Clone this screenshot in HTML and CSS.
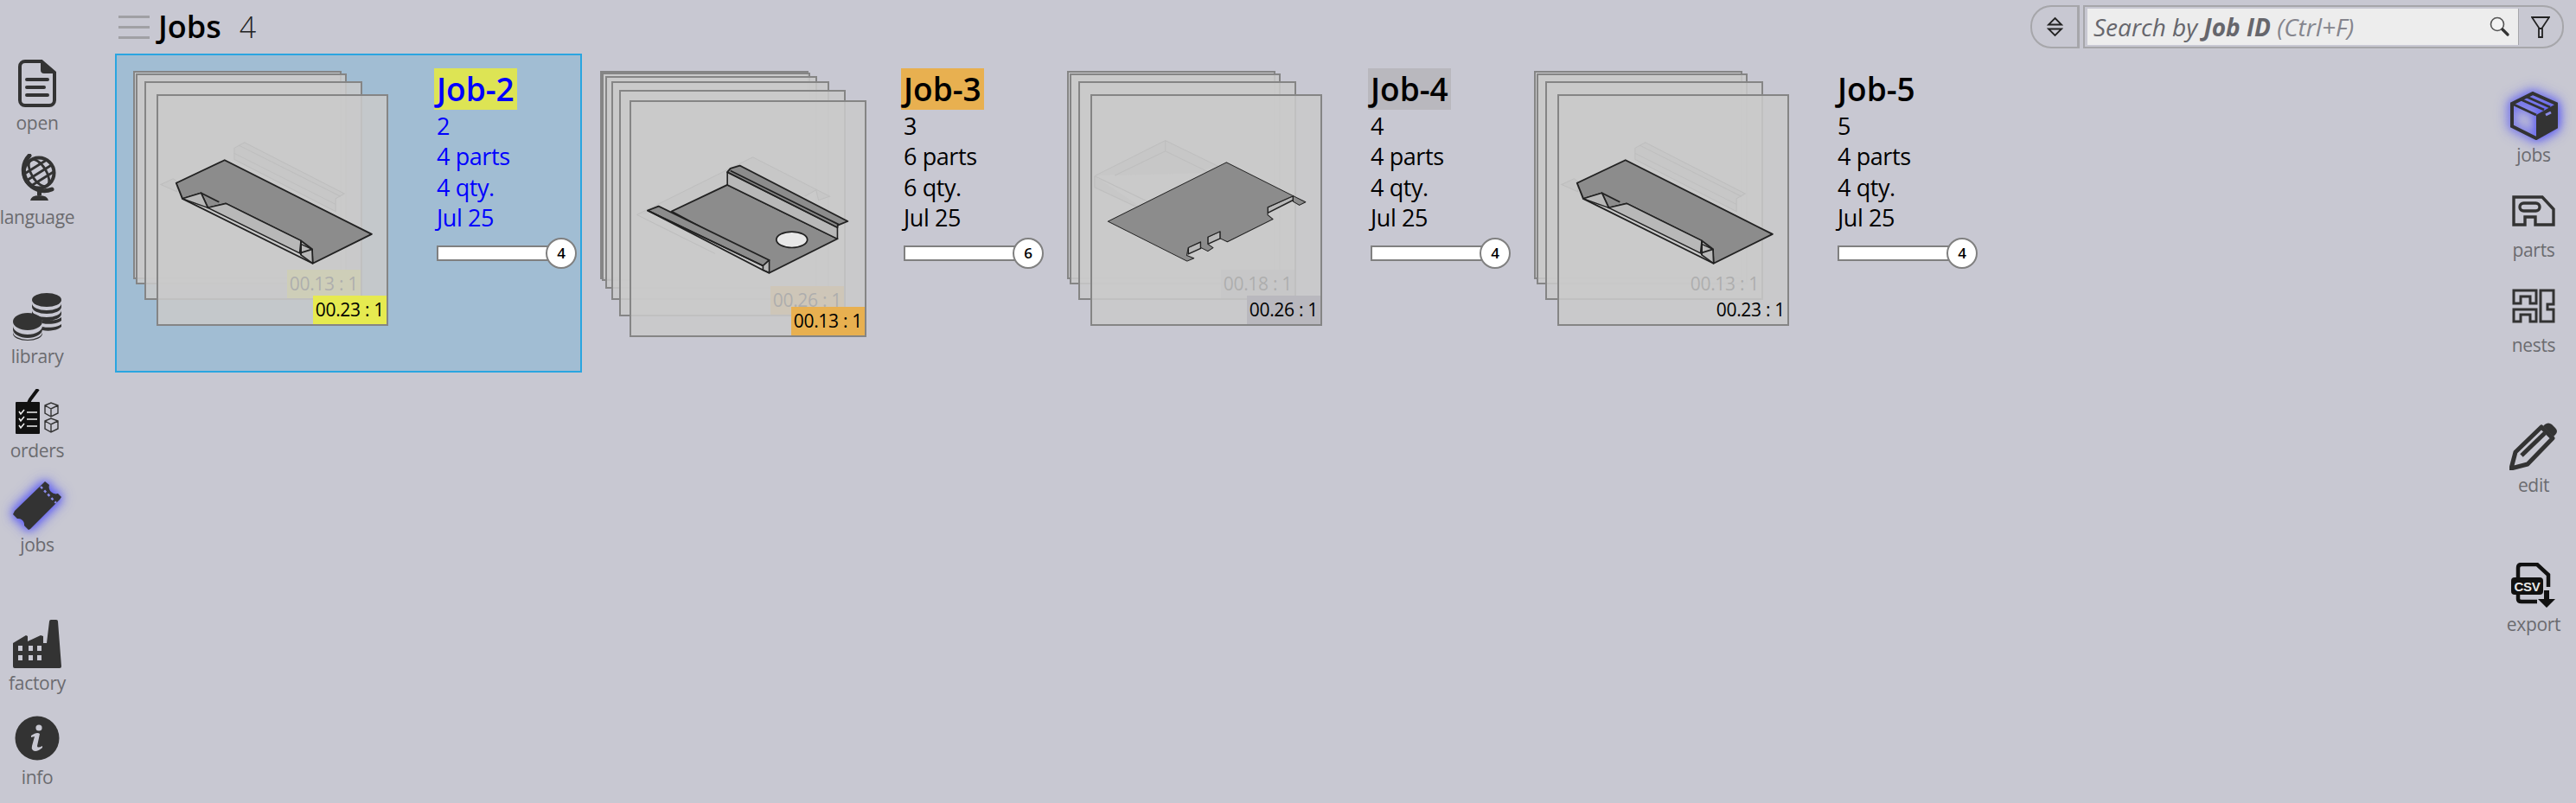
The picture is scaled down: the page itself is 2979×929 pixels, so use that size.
FILE: index.html
```html
<!DOCTYPE html>
<html lang="en">
<head>
    <meta charset="UTF-8">
    <title>Jobs</title>
    <link rel="stylesheet" href="styles.css">
</head>
<body>
    <!-- Shared drawings -->
    <svg class="defs">
        <symbol id="part-channel" viewBox="170 178 736 804" preserveAspectRatio="none">
            <g class="ghost">
                <path d="M415 362 L448 342 L770 522 L742 540 V585 L415 402 Z"/>
                <path d="M415 380 L742 560 M430 352 L758 532"/>
                <path d="M178 490 L218 470 L232 480 L230 515 Z"/>
            </g>
            <path class="face" d="M228 485 L384 404 L858 665 L668 768 L666 718 L630 688 L388 557 L330 572 L308 520 L248 540 Z"/>
            <path class="wall" d="M248 540 L308 520 L330 572 Z M330 572 L388 557 L630 688 L626 732 Z M630 700 L666 718 L668 768 L630 738 Z"/>
            <path class="edge" d="M248 540 L668 768 M308 520 L366 552 M626 732 L666 718 M630 688 V738"/>
        </symbol>
        <symbol id="part-tray" viewBox="160 198 753 822" preserveAspectRatio="none">
            <g class="ghost">
                <path d="M178 595 L552 392 L800 530 L764 544 L756 508 L720 530 M178 595 L430 732"/>
            </g>
            <path class="face" d="M290 583 L470 490 L825 680 L605 800 L585 775 L590 760 Z"/>
            <path class="wall" d="M470 445 L825 640 V680 L470 490 Z"/>
            <path class="face" d="M470 445 L480 432 L510 422 L858 618 L826 632 L825 640 Z"/>
            <path class="face" d="M213 580 L248 565 L605 755 L585 775 Z"/>
            <path class="wall" d="M213 580 L585 775 V790 L605 800 V755 L585 775 Z"/>
            <path class="edge" d="M480 440 L830 630 M213 580 L585 790 L605 800"/>
            <ellipse class="hole" cx="678" cy="683" rx="50" ry="28"/>
        </symbol>
        <symbol id="part-plate" viewBox="142 178 736 804" preserveAspectRatio="none">
            <g class="ghost">
                <path d="M150 460 L378 335 L560 432 M150 460 V500 L330 592 M150 460 L330 555 M215 458 L378 372 L520 448 M378 335 V372"/>
            </g>
            <path class="wall" d="M452 712 L492 692 V715 L452 735 Z M515 675 L555 655 V680 L515 700 Z M708 570 L790 530 V545 L708 590 Z"/>
            <path class="face thin" d="M193 620 L575 412 L790 530 V550 L810 563 L830 552 L790 530 L708 570 V597 L725 612 L578 692 L555 680 V655 L515 675 V700 L532 713 L515 725 L492 712 V692 L452 712 L447 740 L470 750 L448 760 Z"/>
        </symbol>
    </svg>

    <header class="top-bar">
        <div class="title-group">
            <div class="menu-btn"><i></i><i></i><i></i></div>
            <h1>Jobs</h1>
            <span class="job-count">4</span>
        </div>
        <div class="tools">
            <div class="sort-btn">
                <svg width="19" height="24" viewBox="0 0 19 24">
                    <path d="M9.5 2 L17 9.5 H2 Z M2 14.5 H17 L9.5 22 Z" fill="none" stroke="#222" stroke-width="1.8"/>
                </svg>
            </div>
            <div class="search-box">
                <div class="search-field">
                    <span class="search-text">Search by <b>Job ID</b> <em>(Ctrl+F)</em></span>
                    <svg width="23" height="24" viewBox="0 0 23 24">
                        <circle cx="9" cy="9" r="7.5" fill="#f4f4f4" stroke="#555" stroke-width="1.6"/>
                        <path d="M15 15 L21 21" stroke="#333" stroke-width="3.2" stroke-linecap="round"/>
                    </svg>
                </div>
                <div class="filter-btn">
                    <svg width="22" height="25" viewBox="0 0 22 25">
                        <path d="M1 1 H21 L13 13 V24 H9 V13 Z M9 14 H13" fill="none" stroke="#222" stroke-width="1.8"/>
                    </svg>
                </div>
            </div>
        </div>
    </header>

    <div class="workspace">
        <nav class="side side-left">
            <div class="nav-group">
                <div class="nav-item">
                    <div class="nav-icon">
                        <svg width="44" height="56" viewBox="0 0 44 56">
                            <path d="M8 2 H27 L42 15 V47 a6 6 0 0 1 -6 6 H8 a6 6 0 0 1 -6 -6 V8 a6 6 0 0 1 6 -6 Z" fill="none" stroke="#333" stroke-width="4"/>
                            <path d="M27 2 L42 15 H30 a3 3 0 0 1 -3 -3 Z" fill="#333" stroke="#333" stroke-width="2"/>
                            <path d="M10 23 H34 M10 32 H30 M10 41 H34" stroke="#333" stroke-width="4" stroke-linecap="round"/>
                        </svg>
                    </div>
                    <span>open</span>
                </div>
                <div class="nav-item">
                    <div class="nav-icon">
                        <svg width="56" height="56" viewBox="0 0 56 56">
                            <circle cx="30" cy="22" r="17.5" fill="none" stroke="#333" stroke-width="4"/>
                            <g transform="rotate(-32 30 22)" fill="none" stroke="#333" stroke-width="2.8">
                                <path d="M14 14 H46 M12 22 H48 M14 30 H46"/>
                                <ellipse cx="30" cy="22" rx="8.5" ry="17.5"/>
                            </g>
                            <path d="M19 2 A 24 24 0 0 0 45 41" fill="none" stroke="#333" stroke-width="5" stroke-linecap="round"/>
                            <path d="M28 43 H33 V48 H28 Z M20 54 Q21 48 30 48 Q40 48 41 54 Z" fill="#333"/>
                        </svg>
                    </div>
                    <span>language</span>
                </div>
            </div>
            <div class="nav-group">
                <div class="nav-item">
                    <div class="nav-icon">
                        <svg width="56" height="56" viewBox="0 0 56 56">
                            <ellipse cx="39" cy="8" rx="17" ry="8" fill="#333"/>
                            <path d="M22 12 a17 8 0 0 0 34 0 v4 a17 8 0 0 1 -34 0 Z M22 20 a17 8 0 0 0 34 0 v4 a17 8 0 0 1 -34 0 Z M34 31 a17 8 0 0 0 22 -3 v4 a17 8 0 0 1 -22 3 Z M34 39 a17 8 0 0 0 22 -3 v3 a17 8 0 0 1 -22 4 Z" fill="#333"/>
                            <ellipse cx="17" cy="33" rx="17" ry="10" fill="#333"/>
                            <path d="M0 38 a17 10 0 0 0 34 0 v4 a17 10 0 0 1 -34 0 Z M0 45 a17 9 0 0 0 34 0 v2 a17 8 0 0 1 -34 0 Z" fill="#333"/>
                        </svg>
                    </div>
                    <span>library</span>
                </div>
                <div class="nav-item">
                    <div class="nav-icon">
                        <svg width="50" height="52" viewBox="0 0 50 52">
                            <rect x="0" y="15" width="28" height="37" rx="1" fill="#111"/>
                            <path d="M26 0 L17 12 Q12 21 18 20" fill="none" stroke="#111" stroke-width="4"/>
                            <path d="M4 26 L6 29 L10 24 M4 34 L6 37 L10 32 M4 42 L6 45 L10 40 M13 27 H25 M13 35 H25 M13 43 H25" fill="none" stroke="#eee" stroke-width="1.6"/>
                            <path d="M34 19 L41 16 L49 19 V28 L41 32 L34 28 Z M34 19 L41 23 L49 19 M41 23 V32 M34 37 L41 34 L49 37 V46 L41 50 L34 46 Z M34 37 L41 41 L49 37 M41 41 V50" fill="none" stroke="#333" stroke-width="1.4"/>
                        </svg>
                    </div>
                    <span>orders</span>
                </div>
                <div class="nav-item">
                    <div class="nav-icon glow">
                        <svg width="56" height="56" viewBox="0 0 56 56">
                            <path d="M35 2 L37 0 L42 4 A8 8 0 0 0 52 14 L56 18 L54 21 L20 55 L18 56 L13 51 A7 7 0 0 0 5 43 L0 38 L2 34 Z" fill="#333"/>
                            <path d="M32 6 L50 25" stroke="#8a8ae8" stroke-width="2.5" stroke-dasharray="3 3"/>
                        </svg>
                    </div>
                    <span>jobs</span>
                </div>
            </div>
            <div class="nav-group">
                <div class="nav-item">
                    <div class="nav-icon">
                        <svg width="56" height="56" viewBox="0 0 56 56">
                            <path d="M0 27 L15 18 L17 19 V25 L32 18 L35 19 V27 H39 L42 2 Q42 0 44 0 H50 Q52 0 52 2 L56 54 Q56 56 54 56 H2 Q0 56 0 54 Z" fill="#333"/>
                            <path d="M6 30 h5 v6 h-5 Z M18 30 h5 v6 h-5 Z M28 30 h5 v6 h-5 Z M6 41 h5 v6 h-5 Z M18 41 h5 v6 h-5 Z M28 41 h5 v6 h-5 Z" fill="#c8c8d2"/>
                        </svg>
                    </div>
                    <span>factory</span>
                </div>
                <div class="nav-item">
                    <div class="nav-icon">
                        <svg width="52" height="52" viewBox="0 0 52 52">
                            <circle cx="26" cy="26" r="25.5" fill="#333"/>
                            <circle cx="28" cy="14" r="3.6" fill="#c8c8d2"/>
                            <path d="M19 23 Q26 18 29 21 L26 35 Q26 38 32 35 L32 37 Q25 43 21 40 Q19 38 20 35 L23 24 L19 25 Z" fill="#c8c8d2"/>
                        </svg>
                    </div>
                    <span>info</span>
                </div>
            </div>
        </nav>

        <section class="job-list">
            <article class="job-card selected yellow">
                <div class="stack">
                    <div class="sheet s4-1"></div>
                    <div class="sheet s4-2"></div>
                    <div class="sheet s4-3"><span class="badge">00.13 : 1</span></div>
                    <div class="sheet s4-4">
                        <svg class="part"><use href="#part-channel"/></svg>
                        <span class="badge">00.23 : 1</span>
                    </div>
                </div>
                <div class="info">
                    <h2><mark>Job-2</mark></h2>
                    <p>2</p>
                    <p>4 parts</p>
                    <p>4 qty.</p>
                    <p>Jul 25</p>
                    <div class="progress"><div class="bar"></div><div class="knob">4</div></div>
                </div>
            </article>

            <article class="job-card orange">
                <div class="stack">
                    <div class="sheet s6-1"></div>
                    <div class="sheet s6-2"></div>
                    <div class="sheet s6-3"></div>
                    <div class="sheet s6-4"></div>
                    <div class="sheet s6-5"><span class="badge">00.26 : 1</span></div>
                    <div class="sheet s6-6">
                        <svg class="part"><use href="#part-tray"/></svg>
                        <span class="badge">00.13 : 1</span>
                    </div>
                </div>
                <div class="info">
                    <h2><mark>Job-3</mark></h2>
                    <p>3</p>
                    <p>6 parts</p>
                    <p>6 qty.</p>
                    <p>Jul 25</p>
                    <div class="progress"><div class="bar"></div><div class="knob">6</div></div>
                </div>
            </article>

            <article class="job-card grey">
                <div class="stack">
                    <div class="sheet s4-1"></div>
                    <div class="sheet s4-2"></div>
                    <div class="sheet s4-3"><span class="badge">00.18 : 1</span></div>
                    <div class="sheet s4-4">
                        <svg class="part"><use href="#part-plate"/></svg>
                        <span class="badge">00.26 : 1</span>
                    </div>
                </div>
                <div class="info">
                    <h2><mark>Job-4</mark></h2>
                    <p>4</p>
                    <p>4 parts</p>
                    <p>4 qty.</p>
                    <p>Jul 25</p>
                    <div class="progress"><div class="bar"></div><div class="knob">4</div></div>
                </div>
            </article>

            <article class="job-card">
                <div class="stack">
                    <div class="sheet s4-1"></div>
                    <div class="sheet s4-2"></div>
                    <div class="sheet s4-3"><span class="badge">00.13 : 1</span></div>
                    <div class="sheet s4-4">
                        <svg class="part"><use href="#part-channel"/></svg>
                        <span class="badge">00.23 : 1</span>
                    </div>
                </div>
                <div class="info">
                    <h2><mark>Job-5</mark></h2>
                    <p>5</p>
                    <p>4 parts</p>
                    <p>4 qty.</p>
                    <p>Jul 25</p>
                    <div class="progress"><div class="bar"></div><div class="knob">4</div></div>
                </div>
            </article>
        </section>

        <nav class="side side-right">
            <div class="nav-group">
                <div class="nav-item">
                    <div class="nav-icon glow">
                        <svg width="56" height="56" viewBox="0 0 56 56">
                            <path d="M27 2 L54 14 V41 L31 54 L3 40 V14 Z" fill="none" stroke="#333" stroke-width="4"/>
                            <path d="M31 27 L54 14 V41 L31 54 Z" fill="#333"/>
                            <path d="M3 14 L31 27 M13 9 L40 21 M20 6 L47 18" fill="none" stroke="#333" stroke-width="3"/>
                            <path d="M42 27 L48 24" stroke="#8a8ae8" stroke-width="3"/>
                        </svg>
                    </div>
                    <span>jobs</span>
                </div>
                <div class="nav-item">
                    <div class="nav-icon">
                        <svg width="50" height="38" viewBox="0 0 50 38">
                            <path d="M2 3 H35 L48 17 V35 H27 V26 H15 V35 H2 Z" fill="none" stroke="#333" stroke-width="3.4"/>
                            <rect x="9" y="10" width="23" height="9" rx="4.5" fill="none" stroke="#333" stroke-width="3.4"/>
                        </svg>
                    </div>
                    <span>parts</span>
                </div>
                <div class="nav-item">
                    <div class="nav-icon">
                        <svg width="50" height="40" viewBox="0 0 50 40">
                            <path d="M2 2 H28 V17 H21 V9 H10 V17 H2 Z M2 38 V24 H28 V38 H21 V30 H10 V38 Z M33 2 H48 V18 H41 V24 H48 V38 H33 Z" fill="none" stroke="#333" stroke-width="3"/>
                        </svg>
                    </div>
                    <span>nests</span>
                </div>
            </div>
            <div class="nav-group">
                <div class="nav-item">
                    <div class="nav-icon">
                        <svg width="56" height="56" viewBox="0 0 56 56">
                            <path d="M2 54 L7 35 L37 6 L50 19 L21 49 Z" fill="none" stroke="#333" stroke-width="5" stroke-linejoin="round"/>
                            <path d="M14 39 L41 13" stroke="#333" stroke-width="5"/>
                            <path d="M41 3 Q45 0 49 3 L53 7 Q57 11 53 15 L51 17 L39 5 Z" fill="#333"/>
                        </svg>
                    </div>
                    <span>edit</span>
                </div>
            </div>
            <div class="nav-group">
                <div class="nav-item">
                    <div class="nav-icon">
                        <svg width="52" height="52" viewBox="0 0 52 52">
                            <path d="M8 17 V6 Q8 2 12 2 H30 L43 14 V28 M8 36 V42 Q8 45 12 45 H30" fill="none" stroke="#111" stroke-width="4.5"/>
                            <rect x="0" y="17" width="37" height="20" rx="4" fill="#111"/>
                            <text class="csv" x="18.5" y="33">CSV</text>
                            <path d="M38 32 H44 V42 H51 L41 52 L31 42 H38 Z" fill="#111"/>
                        </svg>
                    </div>
                    <span>export</span>
                </div>
            </div>
        </nav>
    </div>
</body>
</html>
```
FILE: styles.css
```css
body {
    margin: 0;
    height: 929px;
    overflow: hidden;
    background-color: #c8c8d2;
    color: #000;
    font-family: "Open Sans", "Noto Sans", sans-serif;
}
.defs {
    display: none;
}

/* Header */
.top-bar {
    height: 62px;
    box-sizing: border-box;
    padding: 0 14px 0 137px;
    display: flex;
    align-items: center;
    justify-content: space-between;
}
.title-group {
    display: flex;
    align-items: center;
}
.menu-btn {
    width: 36px;
    display: flex;
    flex-direction: column;
    gap: 9px;
    margin-right: 10px;
}
.menu-btn i {
    height: 3px;
    background-color: #a0a0a4;
}
h1 {
    margin: 0 21px 0 0;
    font-size: 36px;
    font-weight: 550;
    line-height: 44px;
}
.job-count {
    font-size: 34px;
    font-weight: 300;
    line-height: 44px;
    color: #222;
}
.tools {
    display: flex;
    gap: 4px;
    height: 50px;
}
.sort-btn {
    width: 57px;
    box-sizing: border-box;
    border: 2px solid #a6a6aa;
    border-right-width: 3px;
    border-radius: 24px 0 0 24px;
    display: flex;
    align-items: center;
    justify-content: center;
}
.search-box {
    width: 556px;
    box-sizing: border-box;
    border: 2px solid #a6a6aa;
    border-radius: 0 24px 24px 0;
    display: flex;
}
.search-field {
    flex: 1;
    margin: 2px 0 2px 3px;
    padding: 0 10px 0 7px;
    background-color: #ededed;
    border-right: 1px solid #a6a6aa;
    display: flex;
    align-items: center;
    justify-content: space-between;
}
.search-text {
    font-size: 28px;
    font-style: italic;
    color: #66666c;
    white-space: nowrap;
}
.search-text em {
    color: #85858d;
}
.filter-btn {
    width: 50px;
    display: flex;
    align-items: center;
    justify-content: center;
}

/* Side toolbars */
.workspace {
    display: flex;
}
.side {
    flex: none;
    display: flex;
    flex-direction: column;
    gap: 51.5px;
    box-sizing: border-box;
}
.side-left {
    width: 86px;
    padding-top: 7px;
}
.side-right {
    width: 98px;
    padding-top: 44px;
}
.nav-item {
    height: 109px;
    display: flex;
    flex-direction: column;
    align-items: center;
    color: #6b6b6f;
    font-size: 21px;
    line-height: 30px;
    letter-spacing: -0.3px;
}
.side-right .nav-item {
    height: 110px;
}
.nav-icon {
    height: 56px;
    margin-bottom: 2px;
    display: flex;
    align-items: center;
    justify-content: center;
}
.glow {
    filter: drop-shadow(0 0 7px #5f5ff0) drop-shadow(0 0 4px #6f6ff0);
}
.csv {
    fill: #e8e8e8;
    font-family: "Liberation Sans", sans-serif;
    font-weight: bold;
    font-size: 15px;
    text-anchor: middle;
}

/* Job cards */
.job-list {
    flex: 1;
    min-width: 0;
    padding-left: 47px;
    display: flex;
}
.job-card {
    flex: none;
    width: 540px;
    height: 369px;
    box-sizing: border-box;
    border: 2px solid transparent;
    display: flex;
}
.job-card.selected {
    border-color: #2aa5e0;
    background-color: #a1bdd3;
    color: #0000ff;
}
.stack {
    position: relative;
    flex: none;
    width: 367px;
}
.sheet {
    position: absolute;
    box-sizing: border-box;
    border: 2px solid #858585;
    background-color: rgba(201, 201, 201, 0.86);
}
.s4-1 { left: 19px; top: 18px; width: 241px; height: 241px; }
.s4-2 { left: 22px; top: 21px; width: 244px; height: 244px; }
.s4-3 { left: 32px; top: 30px; width: 252px; height: 253px; }
.s4-4 { left: 46px; top: 45px; width: 268px; height: 268px; }
.s6-1 { left: 19px; top: 18px; width: 241px; height: 241px; }
.s6-2 { left: 21px; top: 20px; width: 241px; height: 241px; }
.s6-3 { left: 25px; top: 24px; width: 245px; height: 246px; }
.s6-4 { left: 32px; top: 30px; width: 252px; height: 253px; }
.s6-5 { left: 41px; top: 40px; width: 262px; height: 262px; }
.s6-6 { left: 53px; top: 52px; width: 274px; height: 274px; }
.part {
    display: block;
    width: 100%;
    height: 100%;
}
.ghost {
    fill: #c7c7c7;
    stroke: #bebebe;
    stroke-width: 3;
}
.face {
    fill: #8c8c8c;
    stroke: #222;
    stroke-width: 5.5;
    stroke-linejoin: round;
}
.face.thin {
    stroke-width: 3;
}
.wall {
    fill: #b8b8b8;
    stroke: #222;
    stroke-width: 4.5;
    stroke-linejoin: round;
}
.edge {
    fill: none;
    stroke: #222;
    stroke-width: 5.5;
}
.hole {
    fill: #e8e8e8;
    stroke: #222;
    stroke-width: 5;
}
.badge {
    position: absolute;
    right: 0;
    bottom: 0;
    padding: 0 3px;
    line-height: 33px;
    font-size: 21px;
    letter-spacing: -0.3px;
    color: #000;
    white-space: nowrap;
}
.yellow .badge { background-color: #e6ea50; }
.orange .badge { background-color: #e8b050; }
.grey .badge { background-color: #b9b8be; }

/* Job details */
.info {
    padding-top: 15px;
    font-size: 27px;
    letter-spacing: -0.4px;
}
.info h2 {
    margin: 0 0 1px;
    font-size: 37px;
    font-weight: 550;
    line-height: 48px;
    letter-spacing: 0;
}
.info mark {
    display: inline-block;
    padding: 0 3px;
    background-color: transparent;
    color: inherit;
}
.yellow mark { background-color: #dde454; }
.orange mark { background-color: #e8b050; }
.grey mark { background-color: #b9b8be; }
.info p {
    margin: 0 0 0 3px;
    line-height: 35.4px;
}
.progress {
    display: flex;
    align-items: center;
    margin: 5px 0 0 3px;
}
.bar {
    width: 130px;
    height: 18px;
    box-sizing: border-box;
    border: 2px solid #808080;
    background-color: #fff;
}
.knob {
    width: 36px;
    height: 36px;
    box-sizing: border-box;
    margin-left: -4px;
    border: 2px solid #808080;
    border-radius: 50%;
    background-color: #fff;
    color: #000;
    font-size: 17px;
    font-weight: 600;
    letter-spacing: 0;
    line-height: 32px;
    text-align: center;
}
```
